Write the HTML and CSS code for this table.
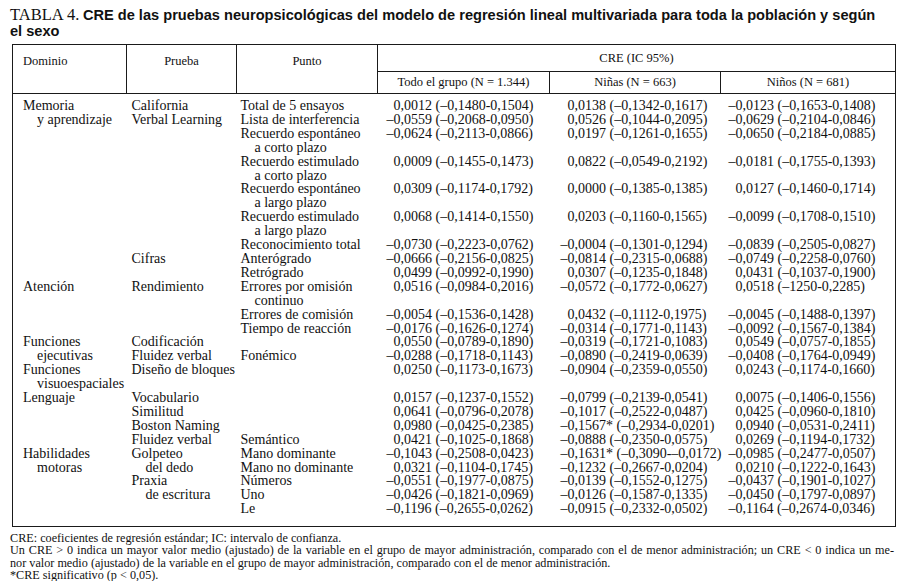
FILE: index.html
```html
<!DOCTYPE html>
<html lang="es">
<head>
<meta charset="utf-8">
<title>Tabla 4</title>
<link rel="stylesheet" href="styles.css">
</head>
<body>
<div class="page">
  <h1 class="title"><span class="tnum">TABLA 4.</span> <span class="tbold">CRE de las pruebas neuropsicológicas del modelo de regresión lineal multivariada para toda la población y según<br>el sexo</span></h1>
  <table class="tbl">
    <colgroup>
      <col class="c1"><col class="c2"><col class="c3"><col class="c4"><col class="c5"><col class="c6">
    </colgroup>
    <thead>
      <tr class="h1">
        <th rowspan="2" class="hd hl">Dominio</th>
        <th rowspan="2" class="hd">Prueba</th>
        <th rowspan="2" class="hd">Punto</th>
        <th colspan="3" class="hcre">CRE (IC 95%)</th>
      </tr>
      <tr class="h2">
        <th class="hs">Todo el grupo (N = 1.344)</th>
        <th class="hs">Niñas (N = 663)</th>
        <th class="hs">Niños (N = 681)</th>
      </tr>
    </thead>
    <tbody>
      <tr class="first">
        <td class="d">Memoria</td><td class="p">California</td><td class="q">Total de 5 ensayos</td>
        <td class="n n1"><span class="s"></span>0,0012 (–0,1480-0,1504)</td><td class="n n2"><span class="s"></span>0,0138 (–0,1342-0,1617)</td><td class="n n3"><span class="s">–</span>0,0123 (–0,1653-0,1408)</td>
      </tr>
      <tr>
        <td class="d"><div class="ind">y aprendizaje</div></td><td class="p">Verbal Learning</td><td class="q">Lista de interferencia</td>
        <td class="n n1"><span class="s">–</span>0,0559 (–0,2068-0,0950)</td><td class="n n2"><span class="s"></span>0,0526 (–0,1044-0,2095)</td><td class="n n3"><span class="s">–</span>0,0629 (–0,2104-0,0846)</td>
      </tr>
      <tr>
        <td class="d"></td><td class="p"></td><td class="q">Recuerdo espontáneo<div class="ind">a corto plazo</div></td>
        <td class="n n1"><span class="s">–</span>0,0624 (–0,2113-0,0866)</td><td class="n n2"><span class="s"></span>0,0197 (–0,1261-0,1655)</td><td class="n n3"><span class="s">–</span>0,0650 (–0,2184-0,0885)</td>
      </tr>
      <tr>
        <td class="d"></td><td class="p"></td><td class="q">Recuerdo estimulado<div class="ind">a corto plazo</div></td>
        <td class="n n1"><span class="s"></span>0,0009 (–0,1455-0,1473)</td><td class="n n2"><span class="s"></span>0,0822 (–0,0549-0,2192)</td><td class="n n3"><span class="s">–</span>0,0181 (–0,1755-0,1393)</td>
      </tr>
      <tr>
        <td class="d"></td><td class="p"></td><td class="q">Recuerdo espontáneo<div class="ind">a largo plazo</div></td>
        <td class="n n1"><span class="s"></span>0,0309 (–0,1174-0,1792)</td><td class="n n2"><span class="s"></span>0,0000 (–0,1385-0,1385)</td><td class="n n3"><span class="s"></span>0,0127 (–0,1460-0,1714)</td>
      </tr>
      <tr>
        <td class="d"></td><td class="p"></td><td class="q">Recuerdo estimulado<div class="ind">a largo plazo</div></td>
        <td class="n n1"><span class="s"></span>0,0068 (–0,1414-0,1550)</td><td class="n n2"><span class="s"></span>0,0203 (–0,1160-0,1565)</td><td class="n n3"><span class="s">–</span>0,0099 (–0,1708-0,1510)</td>
      </tr>
      <tr>
        <td class="d"></td><td class="p"></td><td class="q">Reconocimiento total</td>
        <td class="n n1"><span class="s">–</span>0,0730 (–0,2223-0,0762)</td><td class="n n2"><span class="s">–</span>0,0004 (–0,1301-0,1294)</td><td class="n n3"><span class="s">–</span>0,0839 (–0,2505-0,0827)</td>
      </tr>
      <tr>
        <td class="d"></td><td class="p">Cifras</td><td class="q">Anterógrado</td>
        <td class="n n1"><span class="s">–</span>0,0666 (–0,2156-0,0825)</td><td class="n n2"><span class="s">–</span>0,0814 (–0,2315-0,0688)</td><td class="n n3"><span class="s">–</span>0,0749 (–0,2258-0,0760)</td>
      </tr>
      <tr>
        <td class="d"></td><td class="p"></td><td class="q">Retrógrado</td>
        <td class="n n1"><span class="s"></span>0,0499 (–0,0992-0,1990)</td><td class="n n2"><span class="s"></span>0,0307 (–0,1235-0,1848)</td><td class="n n3"><span class="s"></span>0,0431 (–0,1037-0,1900)</td>
      </tr>
      <tr>
        <td class="d">Atención</td><td class="p">Rendimiento</td><td class="q">Errores por omisión<div class="ind">continuo</div></td>
        <td class="n n1"><span class="s"></span>0,0516 (–0,0984-0,2016)</td><td class="n n2"><span class="s">–</span>0,0572 (–0,1772-0,0627)</td><td class="n n3"><span class="s"></span>0,0518 (–1250-0,2285)</td>
      </tr>
      <tr>
        <td class="d"></td><td class="p"></td><td class="q">Errores de comisión</td>
        <td class="n n1"><span class="s">–</span>0,0054 (–0,1536-0,1428)</td><td class="n n2"><span class="s"></span>0,0432 (–0,1112-0,1975)</td><td class="n n3"><span class="s">–</span>0,0045 (–0,1488-0,1397)</td>
      </tr>
      <tr>
        <td class="d"></td><td class="p"></td><td class="q">Tiempo de reacción</td>
        <td class="n n1"><span class="s">–</span>0,0176 (–0,1626-0,1274)</td><td class="n n2"><span class="s">–</span>0,0314 (–0,1771-0,1143)</td><td class="n n3"><span class="s">–</span>0,0092 (–0,1567-0,1384)</td>
      </tr>
      <tr>
        <td class="d">Funciones</td><td class="p">Codificación</td><td class="q"></td>
        <td class="n n1"><span class="s"></span>0,0550 (–0,0789-0,1890)</td><td class="n n2"><span class="s">–</span>0,0319 (–0,1721-0,1083)</td><td class="n n3"><span class="s"></span>0,0549 (–0,0757-0,1855)</td>
      </tr>
      <tr>
        <td class="d"><div class="ind">ejecutivas</div></td><td class="p">Fluidez verbal</td><td class="q">Fonémico</td>
        <td class="n n1"><span class="s">–</span>0,0288 (–0,1718-0,1143)</td><td class="n n2"><span class="s">–</span>0,0890 (–0,2419-0,0639)</td><td class="n n3"><span class="s">–</span>0,0408 (–0,1764-0,0949)</td>
      </tr>
      <tr>
        <td class="d">Funciones<div class="ind">visuoespaciales</div></td><td class="p">Diseño de bloques</td><td class="q"></td>
        <td class="n n1"><span class="s"></span>0,0250 (–0,1173-0,1673)</td><td class="n n2"><span class="s">–</span>0,0904 (–0,2359-0,0550)</td><td class="n n3"><span class="s"></span>0,0243 (–0,1174-0,1660)</td>
      </tr>
      <tr>
        <td class="d">Lenguaje</td><td class="p">Vocabulario</td><td class="q"></td>
        <td class="n n1"><span class="s"></span>0,0157 (–0,1237-0,1552)</td><td class="n n2"><span class="s">–</span>0,0799 (–0,2139-0,0541)</td><td class="n n3"><span class="s"></span>0,0075 (–0,1406-0,1556)</td>
      </tr>
      <tr>
        <td class="d"></td><td class="p">Similitud</td><td class="q"></td>
        <td class="n n1"><span class="s"></span>0,0641 (–0,0796-0,2078)</td><td class="n n2"><span class="s">–</span>0,1017 (–0,2522-0,0487)</td><td class="n n3"><span class="s"></span>0,0425 (–0,0960-0,1810)</td>
      </tr>
      <tr>
        <td class="d"></td><td class="p">Boston Naming</td><td class="q"></td>
        <td class="n n1"><span class="s"></span>0,0980 (–0,0425-0,2385)</td><td class="n n2"><span class="s">–</span>0,1567* (–0,2934-0,0201)</td><td class="n n3"><span class="s"></span>0,0940 (–0,0531-0,2411)</td>
      </tr>
      <tr>
        <td class="d"></td><td class="p">Fluidez verbal</td><td class="q">Semántico</td>
        <td class="n n1"><span class="s"></span>0,0421 (–0,1025-0,1868)</td><td class="n n2"><span class="s">–</span>0,0888 (–0,2350-0,0575)</td><td class="n n3"><span class="s"></span>0,0269 (–0,1194-0,1732)</td>
      </tr>
      <tr>
        <td class="d">Habilidades</td><td class="p">Golpeteo</td><td class="q">Mano dominante</td>
        <td class="n n1"><span class="s">–</span>0,1043 (–0,2508-0,0423)</td><td class="n n2"><span class="s">–</span>0,1631* (–0,3090-–0,0172)</td><td class="n n3"><span class="s">–</span>0,0985 (–0,2477-0,0507)</td>
      </tr>
      <tr>
        <td class="d"><div class="ind">motoras</div></td><td class="p"><div class="ind">del dedo</div></td><td class="q">Mano no dominante</td>
        <td class="n n1"><span class="s"></span>0,0321 (–0,1104-0,1745)</td><td class="n n2"><span class="s">–</span>0,1232 (–0,2667-0,0204)</td><td class="n n3"><span class="s"></span>0,0210 (–0,1222-0,1643)</td>
      </tr>
      <tr>
        <td class="d"></td><td class="p">Praxia</td><td class="q">Números</td>
        <td class="n n1"><span class="s">–</span>0,0551 (–0,1977-0,0875)</td><td class="n n2"><span class="s">–</span>0,0139 (–0,1552-0,1275)</td><td class="n n3"><span class="s">–</span>0,0437 (–0,1901-0,1027)</td>
      </tr>
      <tr>
        <td class="d"></td><td class="p"><div class="ind">de escritura</div></td><td class="q">Uno</td>
        <td class="n n1"><span class="s">–</span>0,0426 (–0,1821-0,0969)</td><td class="n n2"><span class="s">–</span>0,0126 (–0,1587-0,1335)</td><td class="n n3"><span class="s">–</span>0,0450 (–0,1797-0,0897)</td>
      </tr>
      <tr class="last">
        <td class="d"></td><td class="p"></td><td class="q">Le</td>
        <td class="n n1"><span class="s">–</span>0,1196 (–0,2655-0,0262)</td><td class="n n2"><span class="s">–</span>0,0915 (–0,2332-0,0502)</td><td class="n n3"><span class="s">–</span>0,1164 (–0,2674-0,0346)</td>
      </tr>
    </tbody>
  </table>
  <div class="notes">
    <p class="note">CRE: coeficientes de regresión estándar; IC: intervalo de confianza.</p>
    <p class="note just">Un CRE &gt; 0 indica un mayor valor medio (ajustado) de la variable en el grupo de mayor administración, comparado con el de menor administración; un CRE &lt; 0 indica un me-</p>
    <p class="note">nor valor medio (ajustado) de la variable en el grupo de mayor administración, comparado con el de menor administración.</p>
    <p class="note">*CRE significativo (p &lt; 0,05).</p>
  </div>
</div>
</body>
</html>
```

FILE: styles.css
```css
html, body {
  margin: 0;
  padding: 0;
  background: #ffffff;
}

.page {
  padding: 7px 7px 0 10px;
  color: #111111;
  font-family: "Liberation Serif", "Times New Roman", serif;
}

.title {
  margin: 0;
  font-weight: normal;
  font-size: 14.6px;
  line-height: 16px;
}

.tnum {
  font-family: "Liberation Serif", "Times New Roman", serif;
  font-size: 16.5px;
}

.tbold {
  font-family: "Liberation Sans", Arial, sans-serif;
  font-weight: bold;
  font-size: 14.6px;
}

.tbl {
  margin: 5px 0 0 2px;
  width: 883px;
  table-layout: fixed;
  border-collapse: collapse;
  border: 1px solid #1a1a1a;
}

.c1 { width: 114px; }
.c2 { width: 110px; }
.c3 { width: 141px; }
.c4 { width: 172px; }
.c5 { width: 171px; }
.c6 { width: 175px; }

.tbl th {
  font-weight: normal;
  font-size: 12.5px;
  line-height: 13px;
  padding: 0;
  border: 1px solid #1a1a1a;
}

.h1 { height: 27px; }
.h2 { height: 22px; }

.hd {
  vertical-align: top;
  padding-top: 10px !important;
  text-align: center;
}

.hl {
  text-align: left;
  padding-left: 10px !important;
}

.hcre {
  text-align: center;
  vertical-align: middle;
}

.hs {
  text-align: center;
  vertical-align: middle;
}

.tbl td {
  font-size: 14px;
  line-height: 13.9px;
  padding: 0;
  vertical-align: top;
  white-space: nowrap;
  border: none;
}

.tbl tr.first td { padding-top: 5px; }
.tbl tr.last td { padding-bottom: 10px; }

.d { padding-left: 10px !important; }
.p { padding-left: 5px !important; }
.q { padding-left: 4px !important; }

.n1 { padding-left: 9px !important; }
.n2 { padding-left: 11px !important; }
.n3 { padding-left: 8px !important; }

.ind { padding-left: 14px; }

.s {
  display: inline-block;
  width: 0.5em;
}

.notes {
  margin-top: 5px;
  font-size: 12.2px;
  line-height: 12.2px;
}

.note {
  margin: 0;
  white-space: nowrap;
}

.note.just {
  text-align: justify;
  text-align-last: justify;
  width: 884px;
}
```
